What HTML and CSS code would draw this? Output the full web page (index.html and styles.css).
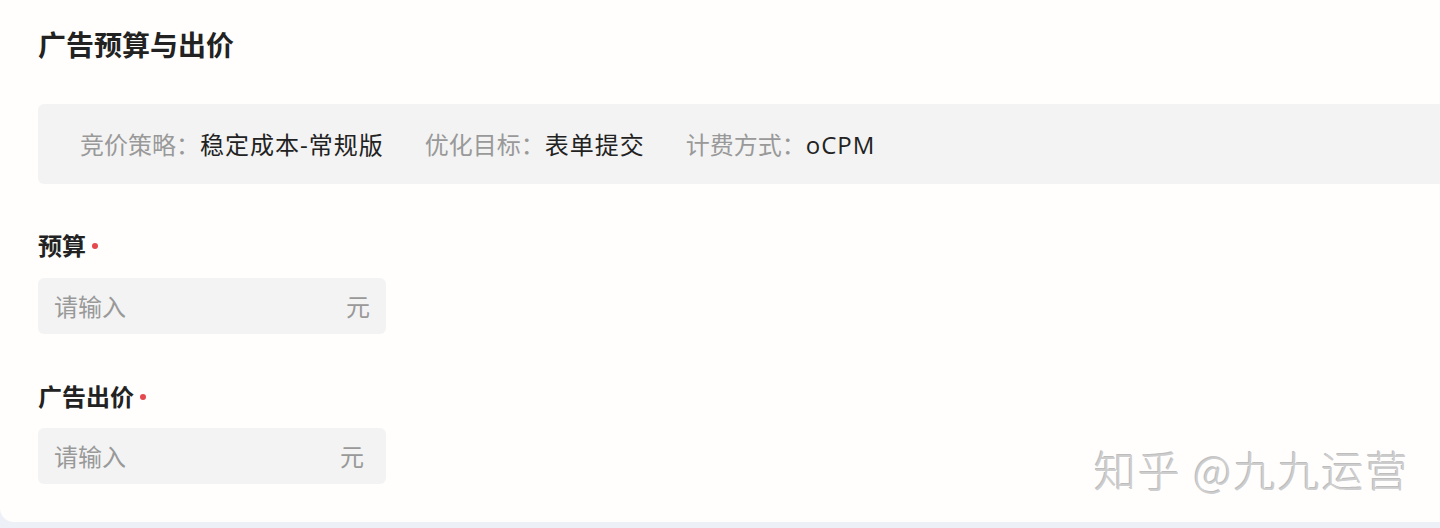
FILE: index.html
```html
<!DOCTYPE html>
<html lang="zh-CN">
<head>
<meta charset="utf-8">
<title>广告预算与出价</title>
<link rel="stylesheet" href="styles.css">
</head>
<body>
<div class="card">
  <h2 class="title">广告预算与出价</h2>
  <div class="info-bar">
    <div class="info-item"><span class="info-key">竞价策略：</span><span class="info-val">稳定成本-常规版</span></div>
    <div class="info-item"><span class="info-key">优化目标：</span><span class="info-val">表单提交</span></div>
    <div class="info-item"><span class="info-key">计费方式：</span><span class="info-val">oCPM</span></div>
  </div>
  <div class="field field-first">
    <div class="label">预算<span class="req"></span></div>
    <div class="input"><span class="placeholder">请输入</span><span class="unit">元</span></div>
  </div>
  <div class="field">
    <div class="label">广告出价<span class="req"></span></div>
    <div class="input input-alt"><span class="placeholder">请输入</span><span class="unit">元</span></div>
  </div>
  <div class="watermark">知乎 @九九运营</div>
</div>
</body>
</html>
```
FILE: styles.css
```css
* { box-sizing: border-box; }
html, body { margin: 0; padding: 0; }
body {
  background: #eef0f7;
  font-family: "Noto Sans CJK SC", "Noto Sans", sans-serif;
  width: 1440px;
  height: 528px;
  overflow: hidden;
}
.card {
  position: relative;
  height: 522px;
  background: #fffefd;
  border-bottom-left-radius: 14px;
  padding: 24px 0 0 38px;
}
.title {
  margin: 0;
  font-size: 28px;
  line-height: 40px;
  font-weight: 700;
  color: #222;
}
.info-bar {
  margin-top: 40px;
  height: 80px;
  background: #f3f3f3;
  border-radius: 6px 0 0 6px;
  display: flex;
  align-items: center;
  padding-left: 42px;
  gap: 41px;
  font-size: 24px;
  line-height: 32px;
}
.info-key { color: #999; }
.info-val {
  color: #222;
  letter-spacing: 1px;
  font-family: "Open Sans", "Noto Sans CJK SC", sans-serif;
}
.field-first { margin-top: 45px; }
.field + .field { margin-top: 46px; }
.label {
  font-size: 24px;
  line-height: 32px;
  font-weight: 700;
  color: #222;
  display: flex;
  align-items: center;
}
.req {
  width: 6px;
  height: 6px;
  border-radius: 50%;
  background: #e5484d;
  margin-left: 6px;
  margin-top: 2px;
}
.input {
  margin-top: 17px;
  width: 348px;
  height: 56px;
  background: #f3f3f3;
  border-radius: 6px;
  display: flex;
  align-items: center;
  justify-content: space-between;
  padding: 0 16px;
  font-size: 24px;
  line-height: 32px;
  color: #999;
}
.input-alt { margin-top: 16px; padding-right: 22px; }
.watermark {
  position: absolute;
  left: 1094px;
  top: 440px;
  font-size: 42px;
  line-height: 58px;
  color: #cdcdcd;
  letter-spacing: 2px;
  text-shadow: 1px 1px 0 #ffffff, -1px -1px 0 #bdbdbd;
  font-weight: 300;
}
```
